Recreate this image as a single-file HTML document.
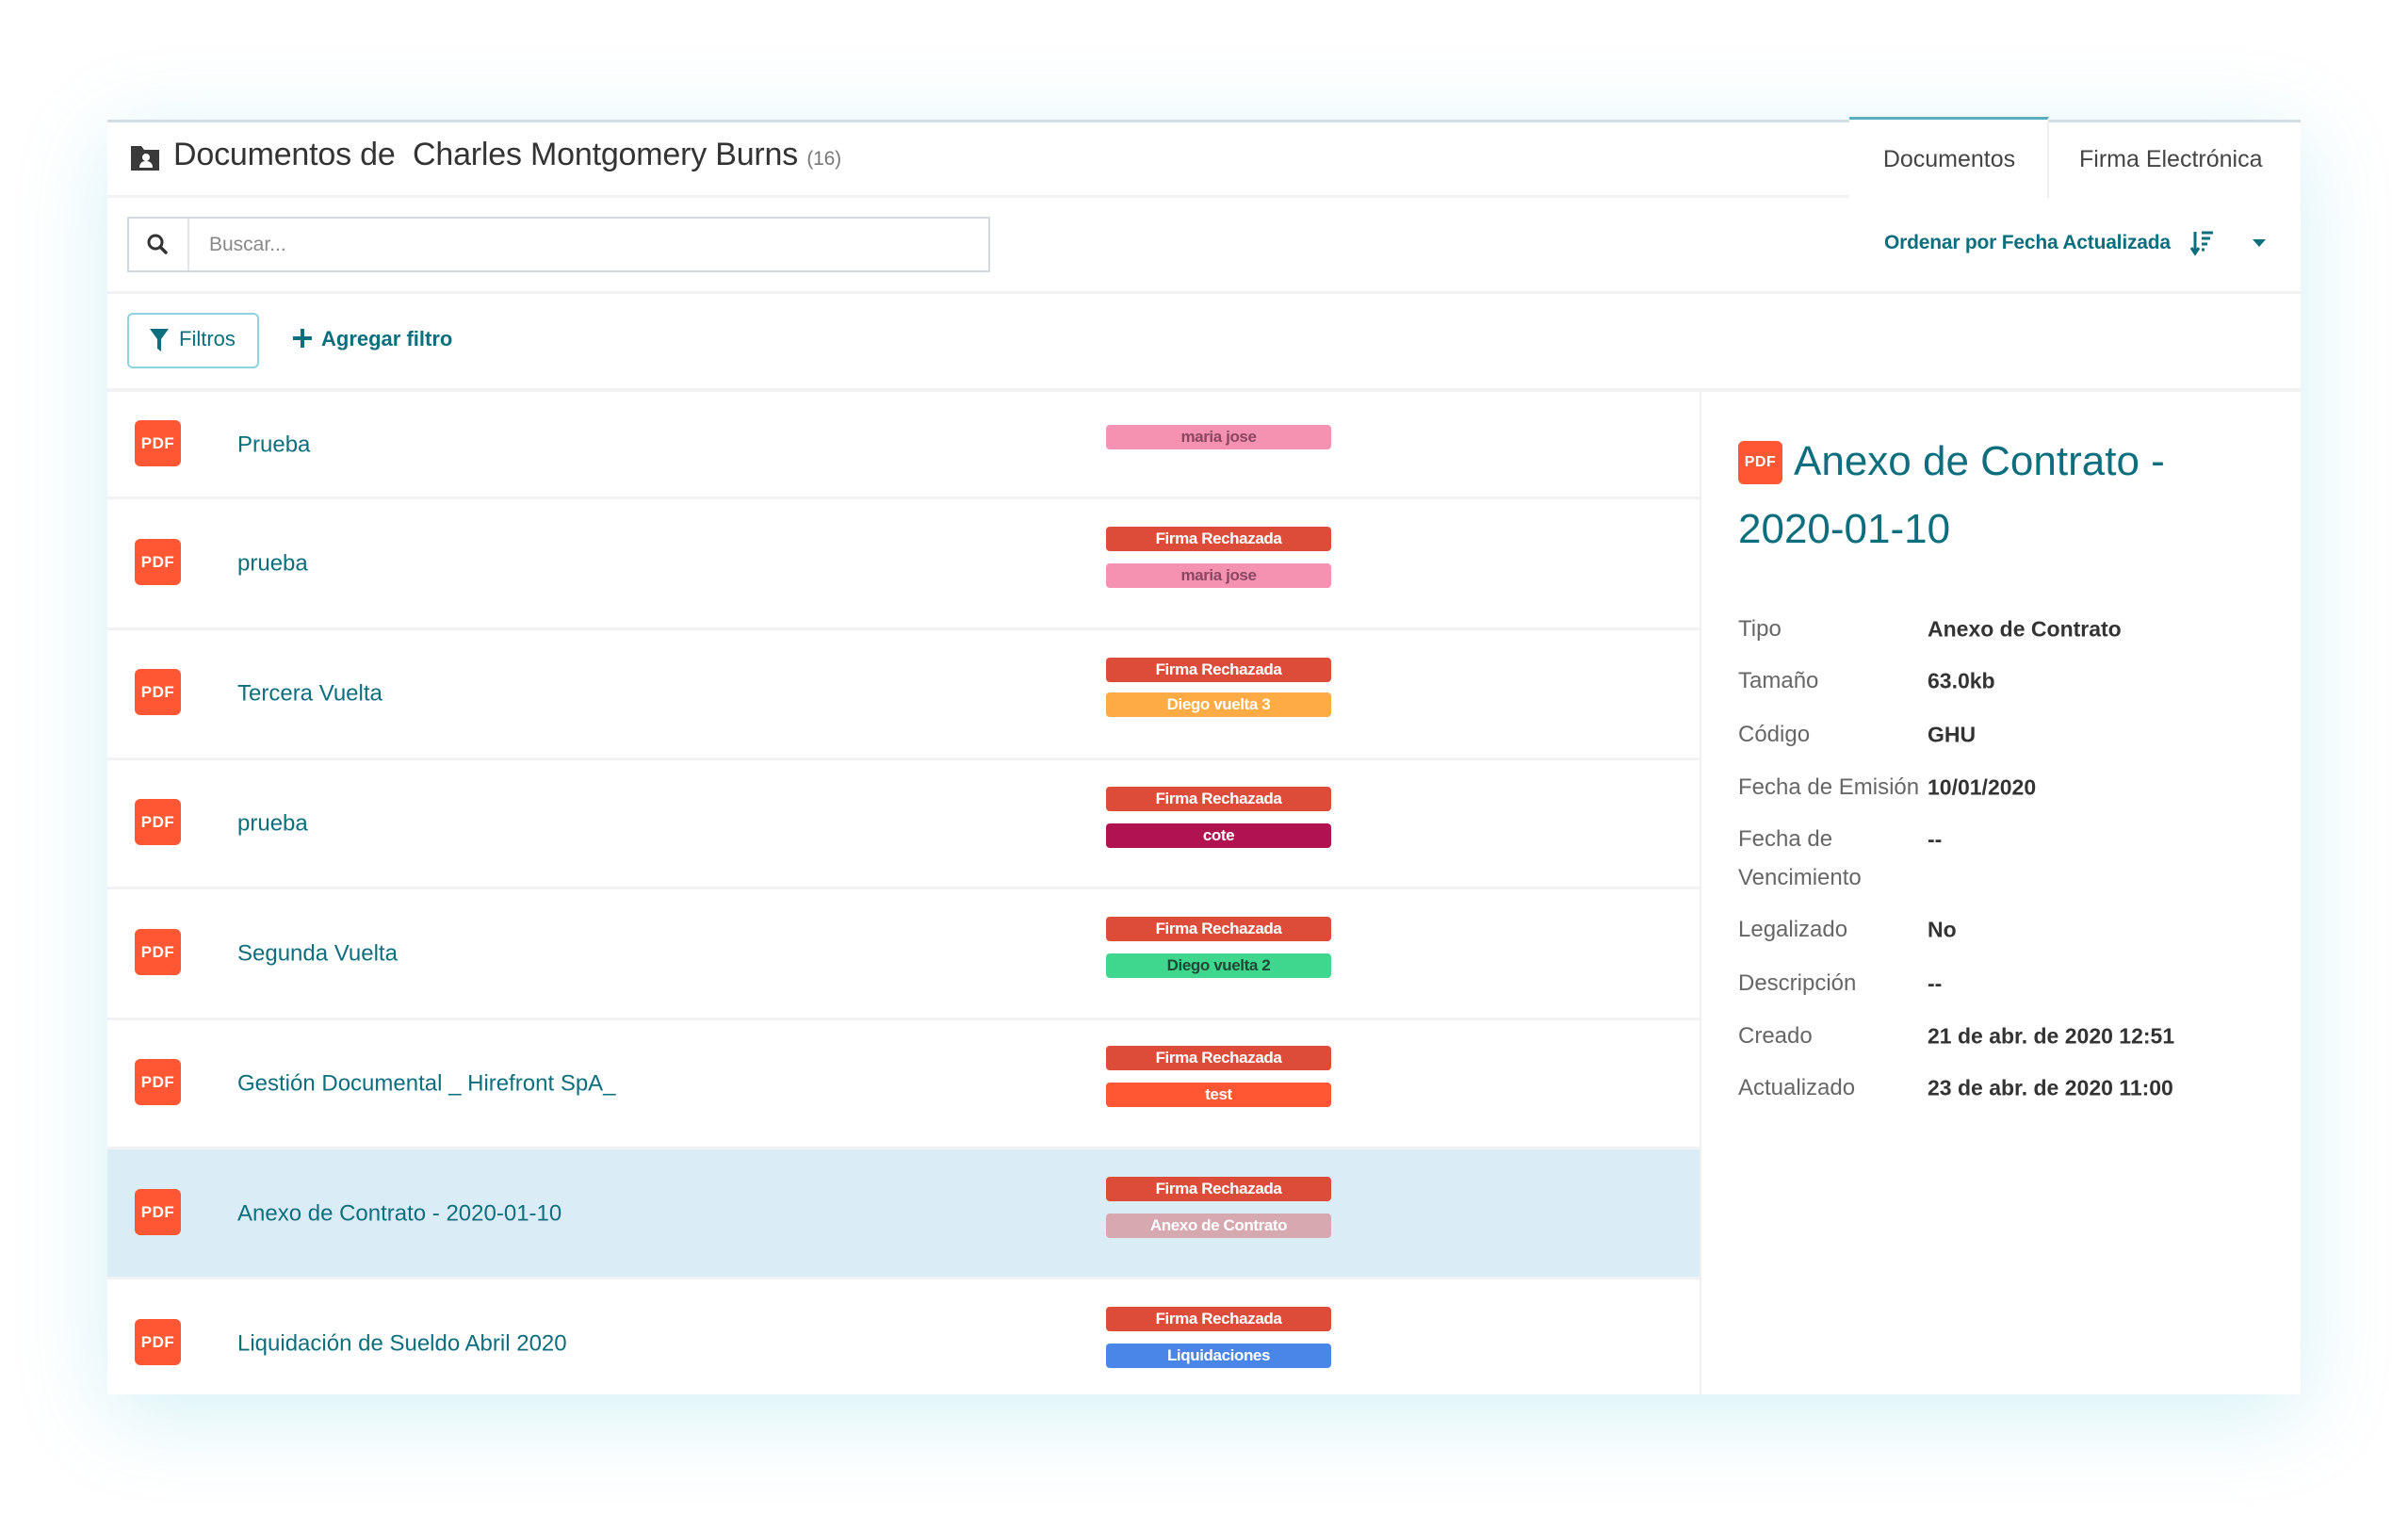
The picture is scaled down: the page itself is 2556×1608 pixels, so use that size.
<!DOCTYPE html>
<html><head><meta charset="utf-8"><style>
*{margin:0;padding:0;box-sizing:border-box}
body{width:2556px;height:1608px;background:#fff;position:relative;overflow:hidden;font-family:"Liberation Sans",sans-serif}
.a{position:absolute}
#card{left:114px;top:127px;width:2328px;height:1353px;background:#fff;border-top:3px solid #d3dde3;box-shadow:0 20px 90px rgba(60,190,210,0.22)}
.hl{position:absolute;height:3px;background:#f1f2f3}
.teal{color:#0d6e7e}
.pdf{position:absolute;width:49px;height:49px;background:#ff5733;border-radius:6px;color:#fff;font-weight:bold;font-size:17px;display:flex;align-items:center;justify-content:center;letter-spacing:0.5px}
.name{position:absolute;left:252px;font-size:24px;color:#0d6e7e;transform:translateY(-45%)}
.tag{position:absolute;left:1174px;width:239px;height:26px;border-radius:4px;color:#fff;font-weight:bold;font-size:17px;display:flex;align-items:center;justify-content:center;letter-spacing:-0.4px}
.lbl{position:absolute;left:1845px;font-size:24px;color:#666;transform:translateY(-50%)}
.val{position:absolute;left:2046px;font-size:23px;color:#333;font-weight:bold;transform:translateY(-50%)}
</style></head><body>
<div id="card" class="a"></div>
<svg class="a" style="left:137px;top:153px" width="34" height="30" viewBox="0 0 34 30"><path d="M2 2h11l3 4h16v22H2z" fill="#3a3a3a"/><circle cx="18" cy="14" r="4" fill="#fff"/><path d="M11 25c0-5 3-7 7-7s7 2 7 7z" fill="#fff"/></svg>
<div class="a" style="left:184px;top:145px;font-size:34px;color:#333;letter-spacing:-0.2px">Documentos de&nbsp; Charles Montgomery Burns <span style="font-size:21px;color:#777">(16)</span></div>
<div class="hl" style="left:114px;top:207px;width:1849px"></div>
<div class="a" style="left:1963px;top:124px;width:212px;height:86px;border-top:3px solid #5aaec0;border-right:2px solid #eceeef;background:#fff"></div>
<div class="a" style="left:1963px;top:155px;width:212px;text-align:center;font-size:25px;color:#444">Documentos</div>
<div class="a" style="left:2207px;top:155px;font-size:25px;color:#444">Firma Electrónica</div>
<div class="a" style="left:135px;top:230px;width:916px;height:59px;border:2px solid #d3d8df"></div>
<div class="a" style="left:199px;top:232px;width:2px;height:55px;background:#e1e4e8"></div>
<svg class="a" style="left:155px;top:247px" width="24" height="24" viewBox="0 0 24 24"><circle cx="10" cy="10" r="7" fill="none" stroke="#333" stroke-width="3"/><path d="M15 15l6 6" stroke="#333" stroke-width="3.5" stroke-linecap="round"/></svg>
<div class="a" style="left:222px;top:248px;font-size:21px;color:#888">Buscar...</div>
<div class="a teal" style="left:2000px;top:246px;font-size:21px;font-weight:bold;letter-spacing:-0.2px">Ordenar por Fecha Actualizada</div>
<svg class="a" style="left:2325px;top:244px" width="26" height="28" viewBox="0 0 26 28"><path d="M5 2v22M1 19l4 6 4-6" stroke="#0d6e7e" stroke-width="3" fill="none"/><path d="M12 3h12M12 9h9M12 15h6M12 21h3" stroke="#0d6e7e" stroke-width="3"/></svg>
<svg class="a" style="left:2390px;top:253px" width="16" height="10" viewBox="0 0 16 10"><path d="M1 1h14L8 9z" fill="#0d6e7e"/></svg>
<div class="hl" style="left:114px;top:309px;width:2328px"></div>
<div class="a" style="left:135px;top:332px;width:140px;height:59px;border:2px solid #8fd3de;border-radius:6px"></div>
<svg class="a" style="left:158px;top:348px" width="22" height="26" viewBox="0 0 22 26"><path d="M1 1h20l-8 11v13l-4-3V12z" fill="#0d6e7e"/></svg>
<div class="a teal" style="left:190px;top:347px;font-size:22px">Filtros</div>
<svg class="a" style="left:310px;top:348px" width="22" height="22" viewBox="0 0 22 22"><path d="M11 1v20M1 11h20" stroke="#0d6e7e" stroke-width="4"/></svg>
<div class="a teal" style="left:341px;top:347px;font-size:22px;font-weight:bold">Agregar filtro</div>
<div class="hl" style="left:114px;top:412px;width:2328px;height:4px"></div>
<div class="a" style="left:1804px;top:414px;width:2px;height:1066px;background:#eef0f1"></div>
<div class="a" style="left:114px;top:1218px;width:1690px;height:138px;background:#daedf7"></div>
<div class="hl" style="left:114px;top:527px;width:1690px"></div>
<div class="hl" style="left:114px;top:666px;width:1690px"></div>
<div class="hl" style="left:114px;top:804px;width:1690px"></div>
<div class="hl" style="left:114px;top:941px;width:1690px"></div>
<div class="hl" style="left:114px;top:1080px;width:1690px"></div>
<div class="hl" style="left:114px;top:1217px;width:1690px"></div>
<div class="hl" style="left:114px;top:1355px;width:1690px"></div>

<div class="pdf" style="left:143px;top:446px">PDF</div><div class="name" style="top:471px">Prueba</div>
<div class="pdf" style="left:143px;top:572px">PDF</div><div class="name" style="top:597px">prueba</div>
<div class="pdf" style="left:143px;top:710px">PDF</div><div class="name" style="top:735px">Tercera Vuelta</div>
<div class="pdf" style="left:143px;top:848px">PDF</div><div class="name" style="top:873px">prueba</div>
<div class="pdf" style="left:143px;top:986px">PDF</div><div class="name" style="top:1011px">Segunda Vuelta</div>
<div class="pdf" style="left:143px;top:1124px">PDF</div><div class="name" style="top:1149px">Gestión Documental _ Hirefront SpA_</div>
<div class="pdf" style="left:143px;top:1262px">PDF</div><div class="name" style="top:1287px">Anexo de Contrato - 2020-01-10</div>
<div class="pdf" style="left:143px;top:1400px">PDF</div><div class="name" style="top:1425px">Liquidación de Sueldo Abril 2020</div>

<div class="tag" style="top:451px;background:#f592b2;color:#8b4660">maria jose</div>
<div class="tag" style="top:559px;background:#dd4b39">Firma Rechazada</div>
<div class="tag" style="top:598px;background:#f592b2;color:#8b4660">maria jose</div>
<div class="tag" style="top:698px;background:#dd4b39">Firma Rechazada</div>
<div class="tag" style="top:735px;background:#fdab45">Diego vuelta 3</div>
<div class="tag" style="top:835px;background:#dd4b39">Firma Rechazada</div>
<div class="tag" style="top:874px;background:#b01350">cote</div>
<div class="tag" style="top:973px;background:#dd4b39">Firma Rechazada</div>
<div class="tag" style="top:1012px;background:#3fd68d;color:#1c4a34">Diego vuelta 2</div>
<div class="tag" style="top:1110px;background:#dd4b39">Firma Rechazada</div>
<div class="tag" style="top:1149px;background:#ff5733">test</div>
<div class="tag" style="top:1249px;background:#dd4b39">Firma Rechazada</div>
<div class="tag" style="top:1288px;background:#d6a9b0">Anexo de Contrato</div>
<div class="tag" style="top:1387px;background:#dd4b39">Firma Rechazada</div>
<div class="tag" style="top:1426px;background:#4a86e8">Liquidaciones</div>

<div class="pdf" style="left:1845px;top:468px;width:47px;height:46px;font-size:16px">PDF</div>
<div class="a teal" style="left:1904px;top:465px;font-size:44px;color:#0d6e7e">Anexo de Contrato -</div>
<div class="a teal" style="left:1845px;top:537px;font-size:44px;color:#0d6e7e">2020-01-10</div>
<div class="lbl" style="top:668px">Tipo</div><div class="val" style="top:668px">Anexo de Contrato</div>
<div class="lbl" style="top:723px">Tamaño</div><div class="val" style="top:723px">63.0kb</div>
<div class="lbl" style="top:780px">Código</div><div class="val" style="top:780px">GHU</div>
<div class="lbl" style="top:836px">Fecha de Emisión</div><div class="val" style="top:836px">10/01/2020</div>
<div class="lbl" style="top:891px">Fecha de</div><div class="val" style="top:891px">--</div>
<div class="lbl" style="top:932px">Vencimiento</div>
<div class="lbl" style="top:987px">Legalizado</div><div class="val" style="top:987px">No</div>
<div class="lbl" style="top:1044px">Descripción</div><div class="val" style="top:1044px">--</div>
<div class="lbl" style="top:1100px">Creado</div><div class="val" style="top:1100px">21 de abr. de 2020 12:51</div>
<div class="lbl" style="top:1155px">Actualizado</div><div class="val" style="top:1155px">23 de abr. de 2020 11:00</div>
</body></html>
